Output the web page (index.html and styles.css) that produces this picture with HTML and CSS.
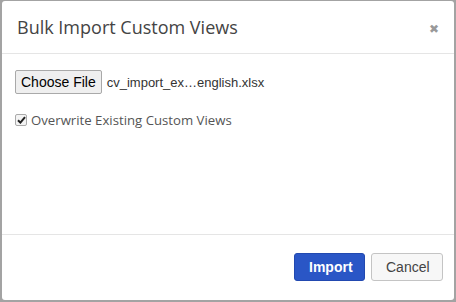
FILE: index.html
```html
<!DOCTYPE html>
<html>

<head>
    <link rel="stylesheet" href="styles.css">
</head>

<body>
    <div class="dialog">
        <div class="dialog-header">
            <h2 class="dialog-title">Bulk Import Custom Views</h2>
            <span class="close-btn">&#x2716;</span>
        </div>
        <div class="dialog-body">
            <div class="file-row">
                <span class="file-btn">Choose File</span>
                <span class="file-name">cv_import_ex…english.xlsx</span>
            </div>
            <label class="check-row">
                <span class="check-box">
                    <svg width="9" height="8" viewBox="0 0 9 8">
                        <path d="M1 4.2 L3.4 6.6 L8 1.2" fill="none" stroke="#222" stroke-width="2" />
                    </svg>
                </span>
                Overwrite Existing Custom Views
            </label>
        </div>
        <div class="dialog-footer">
            <button class="btn btn-primary">Import</button>
            <button class="btn btn-default">Cancel</button>
        </div>
    </div>
</body>

</html>
```

FILE: styles.css
```css
html,
body {
    margin: 0;
    height: 100%;
}

body {
    background-color: #a3a3a3;
    padding: 1px 2px 2px 2px;
    box-sizing: border-box;
}

.dialog {
    background-color: #fff;
    height: 100%;
    border-radius: 3px;
    display: flex;
    flex-direction: column;
    font-family: "Open Sans", sans-serif;
}

.dialog-header {
    height: 52px;
    border-bottom: 1px solid #e5e5e5;
    display: flex;
    align-items: center;
    justify-content: space-between;
    padding: 0 15px;
}

.dialog-title {
    margin: 0;
    font-size: 18px;
    font-weight: 500;
    color: #444;
}

.close-btn {
    color: #999;
    font-size: 12px;
    padding-top: 3px;
    font-family: "DejaVu Sans", sans-serif;
}

.dialog-body {
    flex: 1;
    padding: 16px 13px;
}

.file-row {
    display: flex;
    align-items: center;
    font-family: Arial, "Liberation Sans", sans-serif;
    font-size: 13px;
}

.file-btn {
    border: 1px solid #a9a9a9;
    background-color: #efefef;
    border-radius: 2px;
    padding: 3px 5px;
    color: #000;
    font-size: 14px;
}

.file-name {
    margin-left: 5px;
    color: #333;
}

.check-row {
    display: flex;
    align-items: center;
    margin-top: 17px;
    font-size: 13.2px;
    color: #555;
}

.check-box {
    width: 10px;
    height: 10px;
    border: 1px solid #aaa;
    border-radius: 2px;
    background-color: #f4f4f4;
    display: flex;
    align-items: center;
    justify-content: center;
    margin-right: 4px;
}

.dialog-footer {
    border-top: 1px solid #e5e5e5;
    padding: 18px 11px 19px;
    display: flex;
    justify-content: flex-end;
    gap: 6px;
}

.btn {
    height: 28px;
    border-radius: 3px;
    font-family: Arial, "Liberation Sans", sans-serif;
    font-size: 14px;
    padding: 0 14px;
}

.btn-primary {
    background-color: #2a56c6;
    border: 1px solid #2249b0;
    color: #fff;
    font-weight: bold;
    width: 71px;
}

.btn-default {
    background-color: #f7f7f7;
    border: 1px solid #c4c4c4;
    color: #444;
    width: 72px;
}
```
